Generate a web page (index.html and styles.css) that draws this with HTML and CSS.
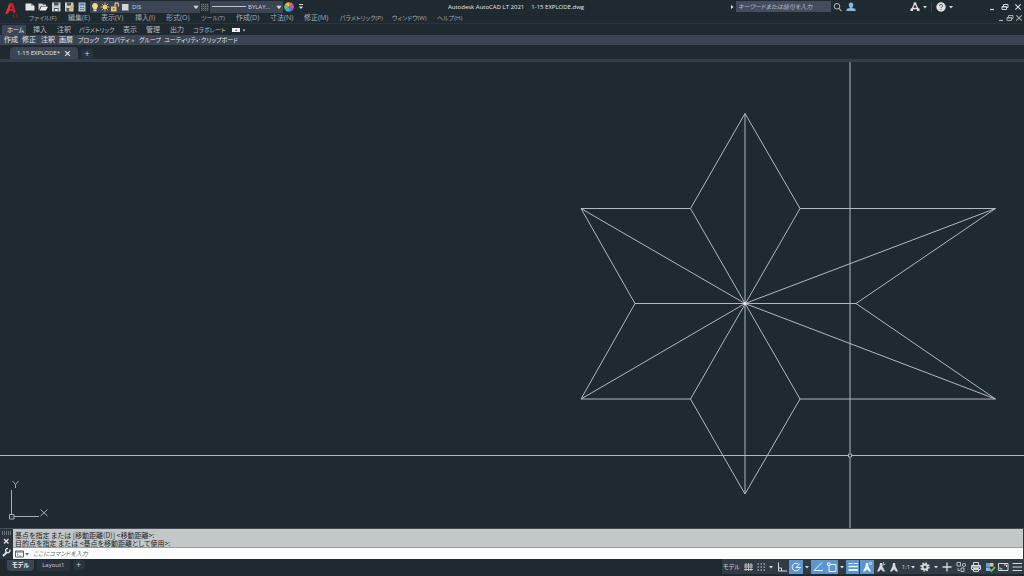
FILE: index.html
```html
<!DOCTYPE html>
<html lang="ja">
<head>
<meta charset="utf-8">
<title>Autodesk AutoCAD LT 2021 - 1-15 EXPLODE.dwg</title>
<link rel="stylesheet" href="styles.css">
</head>
<body>
<svg class="defs" aria-hidden="true">
  <symbol id="caret" viewBox="0 0 6 6"><path d="M1 2h4L3 4.600z" fill="currentColor"/></symbol>
  <symbol id="min" viewBox="0 0 8 8"><path d="M2 6.500h4" stroke="currentColor" stroke-width="1.200"/></symbol>
  <symbol id="restore" viewBox="0 0 8 8"><path d="M2.500 3V1.500h4.500V4.500H5.500M1 3.500h4.500v3H1zM1 4h4.500" fill="none" stroke="currentColor"/></symbol>
  <symbol id="close" viewBox="0 0 8 8"><path d="M1.300 1.300l5.400 5.400M6.700 1.300L1.300 6.700" stroke="currentColor" stroke-width="1.200"/></symbol>
  <symbol id="person" viewBox="0 0 12 12"><path d="M5 2h2l.6 3.500L10 10.500H8L6 8.300 4 10.500H2L4.400 5.500z" fill="currentColor" stroke="none"/></symbol>
</svg>
<div class="app">
  <header class="head">
    <button class="logo" aria-label="アプリケーション メニュー">
      <svg viewBox="0 0 24 24"><path d="M5 14.500L9.500 3h3.500l3 9.500-2.500 1.500-0.800-2.500H9l-1 2.500z" fill="#c5202a"/><path d="M5 14.500L9.500 3l1.500 5-2 3-1 2.500z" fill="#e0363c"/><path d="M9.800 9.500h2.300L11 6.300z" fill="#1f2930"/><path d="M13.500 14.500v3h1.500M15.500 14.800h2.500M16.800 14.800v3" fill="none" stroke="#a5202a" stroke-width=".8"/></svg>
    </button>
    <div class="head-rows">
      <div class="titlebar">
        <div class="quick">
          <button class="q" aria-label="新規"><svg viewBox="0 0 12 12"><path d="M1.500 2.500H7L10.500 5v4.500h-9z" fill="#e4e6e7"/><path d="M7 2.500V5h3.500z" fill="#98a0a6"/></svg></button>
          <button class="q" aria-label="開く"><svg viewBox="0 0 12 12"><path d="M1.500 9.500v-7H5l1 1h3v1.500H4L2 9z" fill="#cfd3d6"/><path d="M2.500 9.500L4.500 5.500h6.500L9 9.500z" fill="#f0f1f2"/></svg></button>
          <button class="q" aria-label="保存"><svg viewBox="0 0 12 12"><path d="M2 1.500h8.500v9H2z" fill="#c9ced1"/><path d="M4 1.500h4.500v3H4zM4 7h4.500v3.500H4z" fill="#45505b"/><path d="M4.800 8h3v2h-3z" fill="#e8eaeb"/></svg></button>
          <button class="q" aria-label="名前を付けて保存"><svg viewBox="0 0 12 12"><path d="M2 1.500h8.500v9H2z" fill="#c9ced1"/><path d="M4 2h4v2.500H4zM3.500 7h3v3.500h-3z" fill="#45505b"/><path d="M6 9.500l4.500-5" stroke="#e6ab58" stroke-width="2"/></svg></button>
          <button class="q" aria-label="印刷"><svg viewBox="0 0 12 12"><path d="M2.500 1.500h7v9h-7z" fill="#b9c4cf"/><path d="M3.500 2.500h5v2h-5z" fill="#4a82b8"/><path d="M4 6.500h1.500M6.500 6.500H8M4 8.500h1.500M6.500 8.500H8" stroke="#4f5b67"/></svg></button>
        </div>
        <div class="combo layer">
          <svg viewBox="0 0 10 12"><path d="M5 2a3 3 0 0 0-1.700 5.400V8.500h3.400V7.400A3 3 0 0 0 5 2z" fill="#ffdc7a"/><path d="M3.500 9.500h3" stroke="#dfe2e4" stroke-width="1.500"/></svg>
          <svg viewBox="0 0 10 12"><circle cx="5" cy="6" r="2.300" fill="#ffd670"/><path d="M5 1.500v9M.5 6h9M1.800 2.800l6.400 6.400M8.200 2.800L1.800 9.200" stroke="#f5c65c" stroke-width=".8"/></svg>
          <svg viewBox="0 0 10 12"><path d="M1 5.500h5.500v5H1z" fill="#f1c465"/><path d="M5 5.500V3.500a1.700 1.700 0 0 1 3.400 0v2" fill="none" stroke="#f1d394" stroke-width="1.200"/><path d="M3.800 7v2" stroke="#4a4535"/></svg>
          <svg viewBox="0 0 10 12"><path d="M2 3h6.500v6.500H2z" fill="#d2d4d6"/></svg>
          <select aria-label="画層"><option>DIS</option></select>
          <svg class="caret"><use href="#caret"/></svg>
        </div>
        <svg class="pattern" viewBox="0 0 10 12"><path d="M1 2.500h8v7H1z" fill="#3b4046"/><path d="M1 3.500h8M1 5.500h8M1 7.500h8M1 9.500h8" stroke="#8b9093" stroke-width=".8" stroke-dasharray="1 1"/></svg>
        <div class="combo linetype">
          <i class="line"></i>
          <select aria-label="線種"><option>BYLAY...</option></select>
          <svg class="caret"><use href="#caret"/></svg>
        </div>
        <svg class="wheel" viewBox="0 0 12 12"><path d="M6 6V1.200A4.800 4.800 0 0 1 10.200 3.600z" fill="#ef6a52"/><path d="M6 6l4.200-2.400a4.800 4.800 0 0 1 0 4.800z" fill="#a861c8"/><path d="M6 6l4.200 2.400A4.800 4.800 0 0 1 6 10.800z" fill="#4a7ee0"/><path d="M6 6v4.800A4.800 4.800 0 0 1 1.800 8.400z" fill="#3db6c8"/><path d="M6 6L1.800 8.400a4.800 4.800 0 0 1 0-4.800z" fill="#74c665"/><path d="M6 6L1.800 3.600A4.800 4.800 0 0 1 6 1.200z" fill="#f6b745"/></svg>
        <svg class="more" viewBox="0 0 8 8"><path d="M2 1.500h4" stroke="#d8dbdd"/><path d="M1.800 3.500h4.400L4 6z" fill="#d8dbdd"/></svg>
        <h1 class="title"><span>Autodesk AutoCAD LT 2021</span><span>1-15 EXPLODE.dwg</span></h1>
        <div class="tools">
          <svg class="small" viewBox="0 0 6 6"><path d="M2 1l2.500 2L2 5z" fill="#dfe2e4"/></svg>
          <input class="search" type="search" placeholder="キーワードまたは語句を入力" aria-label="検索">
          <button class="q" aria-label="検索を実行"><svg viewBox="0 0 12 12"><circle cx="5" cy="5.300" r="2.800" fill="none" stroke="#b9bfc2"/><path d="M7 7.500L9.500 10" stroke="#c79d68" stroke-width="1.300"/></svg></button>
          <button class="q" aria-label="サインイン"><svg viewBox="0 0 12 12"><path d="M6 1.500a2.300 2.300 0 0 1 2.300 2.500c0 1.200-.5 1.800-1 2.300v.7l3 .8q.4 1.200.3 2.200H1.500q0-1.200.3-2.200l3-.8v-.7c-.6-.5-1-1.200-1-2.300A2.300 2.300 0 0 1 6 1.500z" fill="#7fbbe6"/></svg></button>
        </div>
        <div class="help">
          <button class="q" aria-label="Autodesk App Store"><svg viewBox="0 0 12 12"><path d="M6 2L2.500 9M6 2l3.500 7M3.500 7.500h5" fill="none" stroke="#e0e2e3" stroke-width="1.300"/><path d="M4.700 1.500h2.600v2.500H4.700zM1.500 7.500H4V10H1.500zM8 7.500h2.500V10H8z" fill="#e0e2e3"/></svg></button>
          <svg class="small"><use href="#caret"/></svg>
          <i class="sep"></i>
          <button class="q" aria-label="ヘルプ"><svg viewBox="0 0 12 12"><circle cx="6" cy="6" r="4.700" fill="#dfe1e2"/><path d="M4.500 5A1.500 1.500 0 1 1 6.500 6.200L6 7M6 8v1" fill="none" stroke="#4a545d"/></svg></button>
          <svg class="small"><use href="#caret"/></svg>
        </div>
        <div class="win">
          <button aria-label="最小化"><svg><use href="#min"/></svg></button>
          <button aria-label="元に戻す"><svg><use href="#restore"/></svg></button>
          <button aria-label="閉じる"><svg><use href="#close"/></svg></button>
        </div>
      </div>
      <div class="menubar">
        <nav class="menu">
          <a class="kana" href="#">ファイル(F)</a><a href="#">編集(E)</a><a href="#">表示(V)</a><a href="#">挿入(I)</a><a href="#">形式(O)</a><a class="kana" href="#">ツール(T)</a><a href="#">作成(D)</a><a href="#">寸法(N)</a><a href="#">修正(M)</a><a class="kana" href="#">パラメトリック(P)</a><a class="kana" href="#">ウィンドウ(W)</a><a class="kana" href="#">ヘルプ(H)</a>
        </nav>
        <div class="win inner">
          <button aria-label="図面を最小化"><svg><use href="#min"/></svg></button>
          <button aria-label="図面を元に戻す"><svg><use href="#restore"/></svg></button>
          <button aria-label="図面を閉じる"><svg><use href="#close"/></svg></button>
        </div>
      </div>
    </div>
  </header>

  <nav class="ribbon">
    <a class="on kana" href="#">ホーム</a><a href="#">挿入</a><a href="#">注釈</a><a class="kana" href="#">パラメトリック</a><a href="#">表示</a><a href="#">管理</a><a href="#">出力</a><a class="kana" href="#">コラボレート</a>
    <button class="rb" aria-label="リボンを最小化"><svg viewBox="0 0 14 6"><path d="M0 1h8v4H0z" fill="#eceeef"/><path d="M3 3.800h2.400L4.200 2.300z" fill="#3b4453"/><path d="M10.500 2.500h3L12 4.500z" fill="#b9bfc3"/></svg></button>
  </nav>
  <nav class="panels">
    <a href="#">作成</a><a href="#">修正</a><a href="#">注釈</a><a href="#">画層</a><a class="kana" href="#">ブロック</a><a class="kana" href="#">プロパティ »</a><a class="kana" href="#">グループ</a><a class="kana" href="#">ユーティリティ</a><a class="kana" href="#">クリップボード</a>
  </nav>

  <div class="files">
    <a class="file" href="#">1-15 EXPLODE*<svg><use href="#close"/></svg></a>
    <button class="add" aria-label="新しい図面">+</button>
  </div>

  <main class="canvas">
    <svg viewBox="0 62 1024 466" role="img" aria-label="図面">
      <g class="draw">
        <path d="M745 113.500L800 208.500H995.500L856 303.500L995.500 399H800L745 494L690.500 399H581L635 303.500L581 208.500H690.500Z"/>
        <path d="M745 113.500V494M635 303.500H856M690.500 208.500L800 399M800 208.500L690.500 399M581 208.500L745 303.500L995.500 208.500M581 399L745 303.500L995.500 399"/>
      </g>
      <circle cx="745" cy="303.500" r="1.500" fill="#e6e9ea"/>
      <g class="cross"><path d="M-1000 455.500H848M852 455.500H2000M850 -900V453.500M850 457.500V1500"/><path d="M848.500 454h3v3h-3z"/></g>
      <g class="ucs"><path d="M11.500 490V515M14 516.500H39M9.500 514.500h4.500v4.500h-4.500zM11.500 516.500h1M12.500 481l3 3.500 3-3.500M15.500 484.500V488M40.500 509.500l7 6.500M47.500 509.500l-7 6.500"/></g>
    </svg>
  </main>

  <section class="command">
    <div class="grip">
      <svg viewBox="0 0 12 30"><path d="M2 3h9M2 5h9" stroke="#aeb5ba" stroke-dasharray="1 1"/><path d="M4 10l4.500 4.500M8.500 10L4 14.500" stroke="#e7e9ea" stroke-width="1.200"/><path d="M3 27l4-4" stroke="#e7e9ea" stroke-width="1.800"/><path d="M9.800 20.500A2.200 2.200 0 1 1 8 19.300" fill="none" stroke="#e7e9ea" stroke-width="1.300"/></svg>
    </div>
    <div class="console">
      <div class="log"><p>基点を指定 または [移動距離(D)] &lt;移動距離&gt;:</p><p>目的点を指定 または &lt;基点を移動距離として使用&gt;:</p></div>
      <label class="prompt">
        <svg viewBox="0 0 16 10"><path d="M2.500 2h8v6h-8zM2.500 3h8" fill="none" stroke="#5c6468"/><path d="M4 4.500l1.300 1L4 6.500M6 7h2" fill="none" stroke="#5c6468" stroke-width=".8"/><path d="M12 4h4l-2 2.500z" fill="#5c6468"/></svg>
        <input type="text" placeholder="ここにコマンドを入力" aria-label="コマンド">
      </label>
    </div>
  </section>

  <footer class="foot">
    <nav class="layouts"><a class="on" href="#">モデル</a><a href="#">Layout1</a><button class="add" aria-label="レイアウトを追加">+</button></nav>
    <div class="status">
      <button class="word">モデル</button>
      <button aria-label="グリッド"><svg viewBox="0 0 12 12"><path d="M4 2v8M6.500 2v8M9 2v8M2 4h9M2 6h9M2 8.500h9" stroke-width=".8"/></svg></button>
      <button aria-label="スナップ"><svg viewBox="0 0 12 12"><path stroke-dasharray="1.500 1.500" d="M2.500 3h8M2.500 6h8M2.500 9h8"/></svg></button>
      <button class="c" aria-label="スナップ設定"><svg><use href="#caret"/></svg></button>
      <button class="w" aria-label="直交モード"><svg viewBox="0 0 12 12"><path d="M2.500 1.500v8.500H11M2.500 7h3v3"/></svg></button>
      <button class="w on" aria-label="極トラッキング"><svg viewBox="0 0 12 12"><path d="M8.500 3.200A3.800 3.800 0 1 0 9.500 7.500M6 6.500h5M6 6.500L10 2.500"/></svg></button>
      <button class="c" aria-label="極トラッキング設定"><svg><use href="#caret"/></svg></button>
      <button class="w on" aria-label="オブジェクト スナップ トラッキング"><svg viewBox="0 0 12 12"><path d="M10 1.500L2 9.500h9"/></svg></button>
      <button class="on" aria-label="オブジェクト スナップ"><svg viewBox="0 0 12 12"><path d="M3 3.500h7v7H3z"/><path d="M1.500 2h2.500v2.500H1.500z" fill="#5b96cf"/></svg></button>
      <button class="c" aria-label="オブジェクト スナップ設定"><svg><use href="#caret"/></svg></button>
      <button class="on" aria-label="線の太さ"><svg viewBox="0 0 12 12"><path d="M1.500 2.500h4M6.500 2.500H11"/><path d="M1.500 5.500H11" stroke-width="1.500"/><path d="M1.500 9H11" stroke-width="2"/></svg></button>
      <button class="w on gap" aria-label="注釈オブジェクトを表示"><svg viewBox="0 0 12 12"><use href="#person"/><circle cx="9.500" cy="2.500" r="1.200" stroke-width=".8"/></svg></button>
      <button aria-label="注釈尺度を追加"><svg viewBox="0 0 12 12"><use href="#person"/><path d="M8.500 1l-.5 3 2.500-1" stroke-width=".8"/></svg></button>
      <button aria-label="注釈"><svg viewBox="0 0 12 12"><use href="#person"/></svg></button>
      <button class="scale">1:1<svg><use href="#caret"/></svg></button>
      <button class="w" aria-label="ワークスペース"><svg viewBox="0 0 12 12"><circle cx="6" cy="6" r="2.500" stroke-width="2"/><circle cx="6" cy="6" r="4" stroke-width="1.500" stroke-dasharray="1.600 1.540"/></svg></button>
      <button class="c" aria-label="ワークスペース切り替え"><svg><use href="#caret"/></svg></button>
      <button class="w" aria-label="注釈モニター"><svg viewBox="0 0 12 12"><path d="M6 1.500v9M1.500 6h9" stroke-width="1.300"/></svg></button>
      <button class="w" aria-label="単位"><svg viewBox="0 0 12 12"><path d="M2 1.500h3.500V5H2zM6 7h3v3.500H6z" stroke-width=".8"/><circle cx="9" cy="4" r="1.600" stroke-width=".8"/><path d="M3 7v2.500h2" stroke-width=".8"/></svg></button>
      <button class="w gap" aria-label="印刷"><svg viewBox="0 0 12 12"><path d="M3.500 4V1.500h5V4M1.500 4.500h9v4h-9zM3.500 7.500h5v3h-5z"/><path d="M2 6h8" stroke-width="1.500"/></svg></button>
      <button aria-label="グラフィックス"><svg viewBox="0 0 12 12" class="color"><path d="M2 2h4v4H2z" fill="#5ba3dd"/><path d="M6 2h3.500v3.500H6z" fill="#e5c378"/><path d="M2 6.500h4V10H2z" fill="#7fb7e2"/><path d="M5.500 8l2 2 3.500-4" fill="none" stroke="#7cc46b" stroke-width="1.600"/></svg></button>
      <button class="w" aria-label="フルスクリーン"><svg viewBox="0 0 12 12"><path d="M1.500 2.500h9.500v7H1.500z"/><path d="M7 4h2.500v2M5.500 8H3V6.500"/></svg></button>
      <button aria-label="カスタマイズ"><svg viewBox="0 0 12 12"><path d="M1.500 2.500h9.500M1.500 6h9.500M1.500 9.500h9.500" stroke-width="1.200"/></svg></button>
    </div>
  </footer>
</div>
</body>
</html>
```
FILE: styles.css
```css
:root {
  --bg: #1f2930;
  --panel: #3b4554;
  --text: #d2d6d9;
  --dim: #a5acb0;
  --blue: #5b96cf;
}
* { box-sizing: border-box; }
body {
  margin: 0;
  background: var(--bg);
  color: var(--text);
  font: 6px/10px "Open Sans", "Noto Sans CJK JP", sans-serif;
  font-feature-settings: "palt";
}
button, input, select {
  margin: 0;
  padding: 0;
  border: 0;
  background: none;
  color: inherit;
  font: inherit;
  font-feature-settings: inherit;
  white-space: nowrap;
  appearance: none;
  outline: 0;
}
a { color: inherit; text-decoration: none; white-space: nowrap; }
p, h1 { margin: 0; font: inherit; }
svg { display: block; flex: none; }
.defs { position: absolute; width: 0; height: 0; }
.app { display: flex; flex-direction: column; height: 100vh; }

.head { display: flex; border-bottom: 1px solid #2b3541; }
.logo, .logo svg { width: 24px; height: 23px; }
.head-rows { flex: 1; min-width: 0; }
.titlebar { display: flex; align-items: center; height: 13px; }
.quick { display: flex; width: 66px; }
.quick .q { width: 13px; }
.q svg { width: 12px; height: 12px; }
.combo { display: flex; align-items: center; height: 12px; background: var(--panel); }
.combo svg { width: 10px; height: 12px; }
.combo select { flex: 1; min-width: 0; }
.combo .caret { width: 8px; height: 8px; }
.layer { width: 110px; }
.layer select { padding-left: 2px; }
.pattern { width: 10px; height: 12px; }
.linetype { width: 73px; gap: 2px; }
.line { width: 34px; height: 1px; margin-left: 2px; background: #c0c5c9; }
.wheel { width: 12px; height: 12px; }
.more { width: 8px; height: 8px; margin-left: 2px; }
.title { display: flex; gap: 7px; margin-left: 143px; white-space: nowrap; color: #e6e9eb; }
.tools { display: flex; align-items: center; margin-left: auto; gap: 1px; }
.small { width: 6px; height: 6px; }
.search { width: 95px; height: 11px; padding: 0 2px; background: #434d5f; font-style: italic; }
.search::placeholder { color: #b7bdc4; }
.help { display: flex; align-items: center; margin-left: 52px; gap: 1px; }
.sep { width: 1px; height: 10px; margin: 0 2px; background: #36414b; }
.win { display: flex; gap: 5px; margin: 0 2px 0 34px; }
.win svg { width: 8px; height: 8px; }
.inner { gap: 1px; margin: 0 1px 0 auto; }
.menubar { display: flex; align-items: center; height: 10px; color: var(--dim); }
.menu {
  display: grid;
  grid-template-columns: 39px 33px 34px 31px 35px 35px 34px 34px 36px 52px 45px 32px;
  padding-left: 5px;
}
.menu, .ribbon, .panels { font-size: 7px; }
.menu .kana, .ribbon .kana, .panels .kana { font-size: 6px; }

.ribbon {
  display: grid;
  grid-template-columns: 26px 24px 22px 44px 23px 24px 23px 44px 16px;
  align-items: center;
  height: 11px;
  padding-left: 2px;
  color: #b7bec2;
}
.ribbon a { padding-left: 5px; }
.ribbon .on { margin-right: 2px; background: var(--panel); color: #eceff1; }
.rb svg { width: 14px; height: 6px; }
.panels {
  display: grid;
  grid-template-columns: 18px 19px 18px 19px 25px 36px 25px 37px auto;
  height: 10px;
  padding-left: 1px;
  background: var(--panel);
  color: #e2e6e9;
}
.panels a { padding-left: 2px; border-left: 1px solid #35404d; }

.files { display: flex; align-items: flex-end; height: 17px; border-bottom: 3px solid #333e4b; }
.file {
  display: flex;
  align-items: center;
  gap: 4px;
  height: 12px;
  margin-left: 10px;
  padding: 0 7px;
  background: var(--panel);
  border-radius: 4px 4px 0 0;
  color: #e6eaec;
}
.file svg { width: 7px; height: 7px; }
.add { width: 12px; height: 10px; margin-left: 3px; border-radius: 3px; background: #2a343e; font-size: 9px; }

.canvas { flex: 1; min-height: 0; }
.canvas svg { width: 100%; height: 100%; }
.canvas path { fill: none; }
.draw { stroke: #b3b9bc; stroke-width: 1px; }
.cross { stroke: #b0b7ba; }
.ucs { stroke: #a7adb1; }

.command { display: flex; height: 31px; background: #2a343f; border-top: 1px solid #454e57; }
.grip { width: 13px; }
.grip svg { width: 12px; height: 30px; }
.console { flex: 1; background: #c3c7c7; color: #202527; margin-right: 1px; }
.log {
  height: 19px;
  padding: 2px 2px 1px;
  border-bottom: 1px solid #989d9e;
  font: 7px/8px "Noto Sans CJK JP", sans-serif;
  font-feature-settings: "palt";
}
.prompt { display: flex; align-items: center; height: 11px; background: #fbfdfd; }
.prompt svg { width: 16px; height: 10px; }
.prompt input { flex: 1; padding-left: 4px; font-style: italic; }
.prompt input::placeholder { color: #5f6669; }

.foot { display: flex; height: 17px; justify-content: space-between; }
.layouts { display: flex; align-items: center; height: 12px; padding-left: 7px; }
.layouts a { padding: 0 5px; background: #28323d; border-radius: 0 0 4px 4px; line-height: 11px; }
.layouts .on { margin-right: 3px; background: var(--panel); color: #f4f6f7; font-weight: 600; }
.status { display: flex; height: 15px; padding: 1px 1px 0 0; background: #303b46; color: #d6dadc; }
.status button { display: flex; align-items: center; justify-content: center; width: 13px; height: 14px; }
.status svg { width: 12px; height: 12px; fill: none; stroke: currentColor; }
.status .color { stroke: none; }
.status .w { width: 14px; }
.status .c { width: 8px; }
.status .c svg, .status .scale svg { width: 6px; height: 6px; stroke: none; }
.status .on { background: var(--blue); color: #eaf4fc; }
.status .gap { margin-left: 1px; }
.status .word { width: 19px; }
.status .scale { width: 18px; }
```
